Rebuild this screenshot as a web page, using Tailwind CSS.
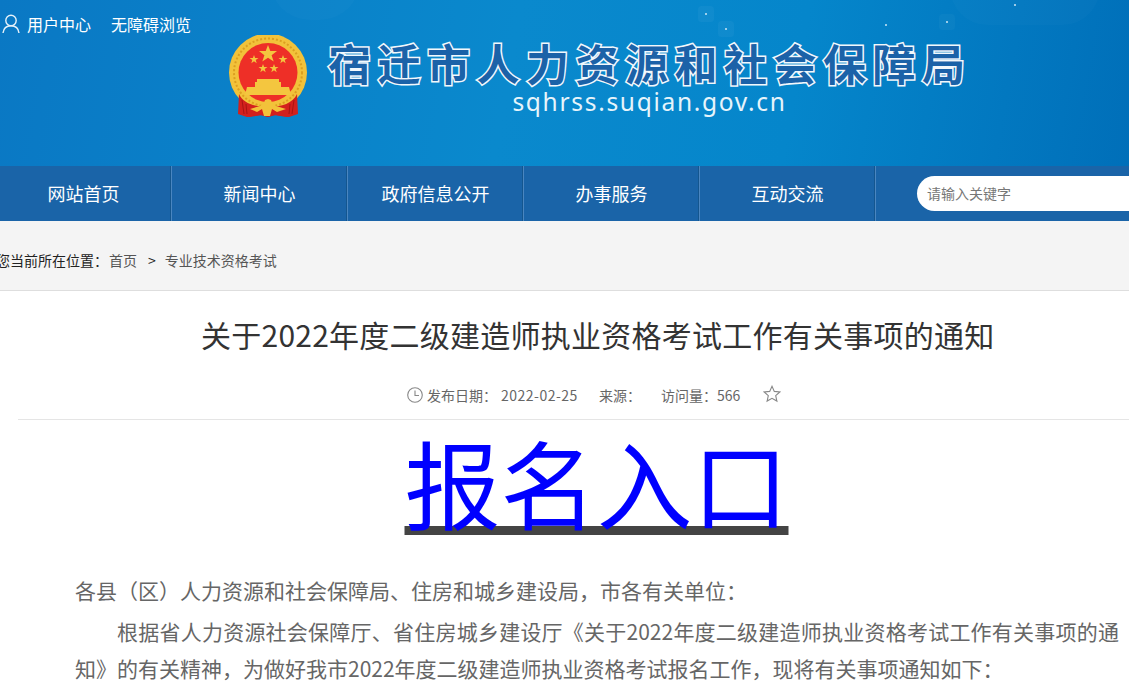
<!DOCTYPE html>
<html lang="zh-CN">
<head>
    <meta charset="UTF-8">
    <title>关于2022年度二级建造师执业资格考试工作有关事项的通知</title>
    <script src="https://cdn.jsdelivr.net/npm/@tailwindcss/browser@4"></script>
</head>
<body class="bg-white h-[684px] overflow-hidden font-['Noto_Sans_CJK_SC','Noto_Sans',sans-serif]">
    <!-- 头部 -->
    <header class="relative h-[166px] overflow-hidden bg-[linear-gradient(100deg,#0a78c4_0%,#0a89cd_45%,#0586cb_70%,#006fb9_100%)]">
        <div class="absolute left-[270px] top-[-60px] w-[90px] h-[80px] rounded-full bg-white/[0.02]"></div>
        <div class="absolute left-[950px] top-[-50px] w-[150px] h-[75px] rounded-full bg-white/[0.02]"></div>
        <span class="absolute left-[705px] top-[13px] w-[2px] h-[2px] rounded-full bg-white/80 shadow-[0_0_0_7px_rgba(255,255,255,0.04)]"></span>
        <span class="absolute left-[725px] top-[28px] w-[2px] h-[2px] rounded-full bg-white/80 shadow-[0_0_0_7px_rgba(255,255,255,0.04)]"></span>
        <span class="absolute left-[885px] top-[24px] w-[2px] h-[2px] rounded-full bg-white/80"></span>
        <span class="absolute left-[946px] top-[21px] w-[2px] h-[2px] rounded-full bg-white/80 shadow-[0_0_0_7px_rgba(255,255,255,0.03)]"></span>
        <span class="absolute left-[1014px] top-[4px] w-[2px] h-[2px] rounded-full bg-white/80"></span>

        <div class="flex items-center h-[38px] pt-[9px] pl-[2px] text-[16px] text-white">
            <svg class="w-[18px] h-[20px] mr-[7px]" viewBox="0 0 18 20" fill="none" stroke="#e6f2fa" stroke-width="1.4">
                <circle cx="9" cy="6.500" r="5.200"/>
                <path d="M1 19c.5-4.500 3.500-7.300 8-7.300s7.500 2.800 8 7.300"/>
            </svg>
            <span>用户中心</span>
            <span class="ml-[20px]">无障碍浏览</span>
        </div>

        <!-- 国徽和标题 -->
        <div class="absolute left-[228px] top-[35px] flex">
            <svg class="w-[80px] h-[84px]" viewBox="0 0 80 84">
                <path d="M11 59l1 20 9 3 13-2 6 2 6-2 13 2 9-3 1-20z" fill="#d3201d"/>
                <circle cx="40" cy="37.500" r="39" fill="#f2c23a"/>
                <circle cx="40" cy="37.500" r="34" fill="none" stroke="#dc9f20" stroke-width="2" stroke-dasharray="2 2"/>
                <circle cx="40" cy="37.500" r="29.500" fill="#ee2f27"/>
                <g fill="#f4c63f">
                    <polygon points="40,10 42.300,16 49,16 43.600,20.300 45.700,26.500 40,22.800 34.300,26.500 36.400,20.300 31,16 37.700,16"/>
                    <polygon points="26,20 27.100,23 30.500,23 27.700,25.100 28.700,28.300 26,26.300 23.300,28.300 24.300,25.100 21.500,23 24.900,23"/>
                    <polygon points="55,20 56.100,23 59.500,23 56.700,25.100 57.700,28.300 55,26.300 52.300,28.300 53.300,25.100 50.500,23 53.900,23"/>
                    <polygon points="35,29 36.100,32 39.500,32 36.700,34.100 37.700,37.300 35,35.300 32.300,37.300 33.300,34.100 30.500,32 33.900,32"/>
                    <polygon points="46,29 47.100,32 50.500,32 47.700,34.100 48.700,37.300 46,35.300 43.300,37.300 44.300,34.100 41.500,32 44.900,32"/>
                    <path d="M29 44h22v3h2v5h8l2 8H17l2-8h8v-5h2z"/>
                </g>
                <path d="M11 59c4 9 15 13 29 13s25-4 29-13l1 20-9 3-13-2-8 2-8-2-13 2-9-3z" fill="#d3201d"/>
                <path d="M22 74l10-3 4-3 1-3 3-1 3 1 1 3 4 3 10 3-9 3-5-3-2 7h-4l-2 0-2-7-5 3z" fill="#f2c23a"/>
                <path d="M14 65l2 14M18 69l1 10M66 65l-2 14M62 69l-1 10" stroke="#a81412" stroke-width="1" fill="none"/>
            </svg>
        </div>
        <div class="absolute left-[328px] top-[37px] w-[637px] text-center">
            <h1 class="flex justify-between h-[50px] text-[43px] leading-[50px] font-bold text-[#1b62a8] [-webkit-text-stroke:3px_#f2f8fc] [paint-order:stroke_fill]">
                <span>宿</span><span>迁</span><span>市</span><span>人</span><span>力</span><span>资</span><span>源</span><span>和</span><span>社</span><span>会</span><span>保</span><span>障</span><span>局</span>
            </h1>
            <p class="mt-[2px] pl-[6px] text-[24.500px] leading-[26px] tracking-[1.700px] text-[#e6f4fb] font-['Noto_Sans',sans-serif]">sqhrss.suqian.gov.cn</p>
        </div>
    </header>

    <!-- 导航 -->
    <nav class="flex h-[55px] bg-[#1a64a8] -ml-1 text-[18px] text-white">
        <a class="flex shrink-0 items-center justify-center w-[176px] border-r border-[#4a86c0] shadow-[inset_-1px_0_0_#14568f]">网站首页</a>
        <a class="flex shrink-0 items-center justify-center w-[176px] border-r border-[#4a86c0] shadow-[inset_-1px_0_0_#14568f]">新闻中心</a>
        <a class="flex shrink-0 items-center justify-center w-[176px] border-r border-[#4a86c0] shadow-[inset_-1px_0_0_#14568f]">政府信息公开</a>
        <a class="flex shrink-0 items-center justify-center w-[176px] border-r border-[#4a86c0] shadow-[inset_-1px_0_0_#14568f]">办事服务</a>
        <a class="flex shrink-0 items-center justify-center w-[176px] border-r border-[#4a86c0] shadow-[inset_-1px_0_0_#14568f]">互动交流</a>
        <div class="shrink-0 ml-[41px] mt-[10px] w-[260px] h-[35px] rounded-l-full bg-white pl-[10px] text-[14px] leading-[35px] text-[#777]">请输入关键字</div>
    </nav>

    <!-- 当前位置 -->
    <div class="flex items-center h-[70px] -ml-1 pt-[10px] bg-[#f4f4f4] border-b border-[#dedede] text-[14px] text-[#555]">
        <span class="text-[#222] mr-[1px]">您当前所在位置：</span>
        <span>首页</span>
        <span class="ml-[11px] mr-[9px] text-[#222]">&gt;</span>
        <span>专业技术资格考试</span>
    </div>

    <!-- 正文 -->
    <main>
        <h2 class="mt-[22px] ml-[201px] text-[30px] leading-[42px] text-[#333] tracking-[0.250px]">关于2022年度二级建造师执业资格考试工作有关事项的通知</h2>

        <div class="flex items-center ml-[18px] mt-[24px] h-[41px] pl-[389px] pb-[8px] border-b border-[#e5e5e5] text-[14px] text-[#666]">
            <svg class="w-[16px] h-[16px] mr-[4px]" viewBox="0 0 16 16" fill="none" stroke="#888" stroke-width="1.100">
                <circle cx="8" cy="8" r="7.300"/>
                <path d="M8 3.500V8.500H12"/>
            </svg>
            <span>发布日期：</span>
            <span class="ml-[4px] tracking-[0.500px]">2022-02-25</span>
            <span class="ml-[21px]">来源：</span>
            <span class="ml-[20px]">访问量：566</span>
            <svg class="w-[18px] h-[18px] ml-[23px] mb-[3px]" viewBox="0 0 18 18" fill="none" stroke="#888" stroke-width="1.100">
                <path d="M9 1.300l2.300 5.100 5.500.6-4.100 3.700 1.200 5.400L9 13.300l-4.900 2.800 1.200-5.400L1.200 7l5.500-.6z"/>
            </svg>
        </div>

        <div class="mt-[-4px] pl-[64px] text-center">
            <a class="inline-block text-[96px] leading-[130px] text-[#0000ff] underline decoration-[#444] decoration-[9px] underline-offset-[4px] [text-decoration-skip-ink:none]">报名入口</a>
        </div>

        <div class="mt-[26px] pl-[75px] pr-[10px] text-[21px] leading-[37px] text-[#666]">
            <p>各县（区）人力资源和社会保障局、住房和城乡建设局，市各有关单位：</p>
            <p class="indent-[42px] mt-[4px] text-justify">根据省人力资源社会保障厅、省住房城乡建设厅《关于2022年度二级建造师执业资格考试工作有关事项的通知》的有关精神，为做好我市2022年度二级建造师执业资格考试报名工作，现将有关事项通知如下：</p>
        </div>
    </main>
</body>
</html>
